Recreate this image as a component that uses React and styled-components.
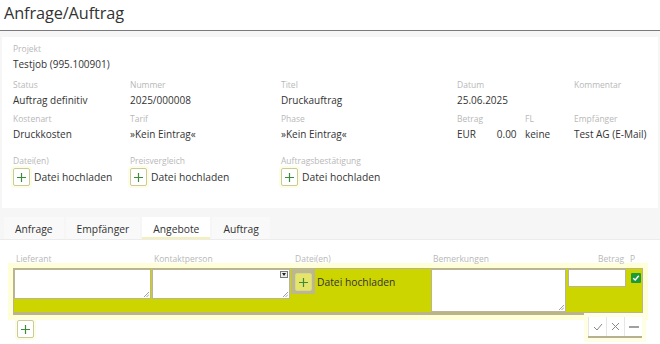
import React from 'react';
import styled, { createGlobalStyle } from 'styled-components';

const GlobalStyle = createGlobalStyle`
  body {
    margin: 0;
    background: #f6f6f6;
    font-family: "Open Sans", "Liberation Sans", sans-serif;
    color: #333;
  }
`;

const Page = styled.div`
  width: 660px;
  height: 344px;
  overflow: hidden;
`;

const Header = styled.div`
  height: 31px;
  background: #fff;
  border-bottom: 1px solid #7a7a7a;
  box-sizing: border-box;
`;

const Title = styled.h1`
  margin: 0;
  padding: 0 0 0 4px;
  font-size: 16.3px;
  letter-spacing: -0.1px;
  font-weight: 400;
  line-height: 26px;
  color: #333;
`;

const Card = styled.div`
  margin: 6px 2px 0 2px;
  background: #fff;
  height: 171px;
  padding: 6px 0 0 11px;
  box-sizing: border-box;
`;

const Grid = styled.div`
  display: grid;
  grid-template-columns: 117px 151px 176px 68px 49px 1fr;
  grid-auto-rows: auto;
`;

const Field = styled.div`
  grid-column: ${p => p.span ? `span ${p.span}` : 'auto'};
  height: ${p => p.h || 34}px;
`;

const Label = styled.div`
  font-size: 8.5px;
  line-height: 12px;
  color: #b8b8b8;
`;

const Value = styled.div`
  font-size: 10px;
  line-height: 14px;
  margin-top: 2px;
  color: #333;
  white-space: nowrap;
`;

const Upload = styled.div`
  display: flex;
  align-items: center;
  gap: 4px;
  margin-top: 1px;
  font-size: 10.3px;
  color: #333;
  white-space: nowrap;
`;

const PlusBtn = styled.span`
  display: inline-flex;
  align-items: center;
  justify-content: center;
  width: 17px;
  height: 18px;
  box-sizing: border-box;
  background: ${p => p.tint ? '#e4e56a' : '#fff'};
  border: 1px solid ${p => p.tint ? '#d7d88a' : '#c9cc9a'};
  border-radius: 2px;
  box-shadow: 0 0 0 2px ${p => p.tint ? 'transparent' : '#fdfde6'};
  flex: none;
`;

const TabSection = styled.div`
  margin-top: 9px;
`;

const TabBar = styled.div`
  display: flex;
  gap: 2px;
  padding-left: 4px;
  height: 22px;
  align-items: flex-end;
  border-bottom: 1px solid #ececec;
`;

const Tab = styled.div`
  height: 22px;
  padding: 4px 11px 0 11px;
  box-sizing: border-box;
  display: flex;
  align-items: center;
  font-size: 10.3px;
  color: #333;
  background: ${p => p.active ? '#fff' : '#f9f9f9'};
  border-bottom: 2px solid ${p => p.active ? '#f3f0b8' : 'transparent'};
`;

const TabBody = styled.div`
  background: #fff;
  height: 110px;
  padding: 13px 17px 0 13px;
  box-sizing: border-box;
`;

const cols = '138px 139px 140px 137px 60px 16px';

const HeadRow = styled.div`
  display: grid;
  grid-template-columns: ${cols};
  font-size: 8.5px;
  color: #b8b8b8;
  height: 15px;
  padding-left: 3px;
`;

const HeadCell = styled.div`
  text-align: ${p => p.right ? 'right' : 'left'};
  padding-right: ${p => p.right ? '6px' : 0};
  padding-left: ${p => p.shift || 0}px;
`;

const Row = styled.div`
  display: grid;
  grid-template-columns: ${cols};
  height: 47px;
  box-sizing: border-box;
  background: #cdd500;
  border: 1px solid #bcb489;
  border-bottom-width: 3px;
  box-shadow: 0 0 0 5px #fefed8;
`;

const Cell = styled.div`
  position: relative;
  display: flex;
  align-items: flex-start;
  padding: ${p => p.pad || 0};
`;

const TextArea = styled.div`
  position: relative;
  width: 100%;
  height: ${p => p.h}px;
  background: #fff;
  border: 1px solid #b9b49a;
  box-sizing: border-box;
`;

const Grip = styled.svg`
  position: absolute;
  right: 1px;
  bottom: 1px;
`;

const DropArrow = styled.span`
  position: absolute;
  top: 1px;
  right: 1px;
  width: 8px;
  height: 7px;
  background: #eee;
  border: 1px solid #777;
  box-sizing: border-box;
  &::after {
    content: '';
    position: absolute;
    left: 1px;
    top: 1px;
    border-left: 2px solid transparent;
    border-right: 2px solid transparent;
    border-top: 3px solid #222;
  }
`;

const CellUpload = styled(Upload)`
  margin: 0;
  gap: 2px;
`;

const PlusWell = styled.span`
  display: inline-flex;
  padding: 4px 3px 3px 4px;
  background: #bdb78d;
`;

const Check = styled.span`
  display: inline-flex;
  align-items: center;
  justify-content: center;
  width: 10px;
  height: 10px;
  margin: 4px 0 0 3px;
  background: #1f9a3a;
  border-radius: 1px;
`;

const Footer = styled.div`
  display: flex;
  justify-content: space-between;
  align-items: flex-start;
  margin-top: 2px;
`;

const AddBtn = styled(PlusBtn)`
  margin: 3px 0 0 4px;
`;

const Actions = styled.div`
  display: flex;
  margin-right: 1px;
  box-shadow: 0 0 0 4px #fefee4;
  border-bottom: 2px solid #b5b08e;
`;

const ActionBtn = styled.span`
  display: flex;
  align-items: center;
  justify-content: center;
  width: 17px;
  height: 19px;
  background: #fff;
  border-left: 1px solid #e6e6e6;
`;

const ResizeGrip = () => (
  <Grip width="6" height="6" viewBox="0 0 6 6">
    <path d="M1 6 L6 1 M3.5 6 L6 3.5" stroke="#888" strokeWidth="0.8" />
  </Grip>
);

const Plus = () => (
  <svg width="11" height="11" viewBox="0 0 11 11">
    <path d="M5.5 1 V10 M1 5.5 H10" stroke="#3d8a3d" strokeWidth="1.2" />
  </svg>
);

const UploadButton = () => (
  <Upload>
    <PlusBtn><Plus /></PlusBtn>
    Datei hochladen
  </Upload>
);

export default function App() {
  return (
    <Page>
      <GlobalStyle />
      <Header>
        <Title>Anfrage/Auftrag</Title>
      </Header>
      <Card>
        <Grid>
          <Field span={6} h={36}>
            <Label>Projekt</Label>
            <Value>Testjob (995.100901)</Value>
          </Field>
          <Field h={34}><Label>Status</Label><Value>Auftrag definitiv</Value></Field>
          <Field><Label>Nummer</Label><Value>2025/000008</Value></Field>
          <Field><Label>Titel</Label><Value>Druckauftrag</Value></Field>
          <Field span={2}><Label>Datum</Label><Value>25.06.2025</Value></Field>
          <Field><Label>Kommentar</Label><Value></Value></Field>
          <Field h={42}><Label>Kostenart</Label><Value>Druckkosten</Value></Field>
          <Field h={42}><Label>Tarif</Label><Value>»Kein Eintrag«</Value></Field>
          <Field h={42}><Label>Phase</Label><Value>»Kein Eintrag«</Value></Field>
          <Field h={42}>
            <Label>Betrag</Label>
            <Value>EUR&nbsp;&nbsp;&nbsp;&nbsp;&nbsp;&nbsp;&nbsp;&nbsp;0.00</Value>
          </Field>
          <Field h={42}><Label>FL</Label><Value>keine</Value></Field>
          <Field h={42}><Label>Empfänger</Label><Value>Test AG (E-Mail)</Value></Field>
          <Field><Label>Datei(en)</Label><UploadButton /></Field>
          <Field><Label>Preisvergleich</Label><UploadButton /></Field>
          <Field span={4}><Label>Auftragsbestätigung</Label><UploadButton /></Field>
        </Grid>
      </Card>
      <TabSection>
        <TabBar>
          <Tab>Anfrage</Tab>
          <Tab>Empfänger</Tab>
          <Tab active>Angebote</Tab>
          <Tab>Auftrag</Tab>
        </TabBar>
        <TabBody>
          <HeadRow>
            <HeadCell>Lieferant</HeadCell>
            <HeadCell>Kontaktperson</HeadCell>
            <HeadCell shift={2}>Datei(en)</HeadCell>
            <HeadCell>Bemerkungen</HeadCell>
            <HeadCell right>Betrag</HeadCell>
            <HeadCell>P</HeadCell>
          </HeadRow>
          <Row>
            <Cell pad="0 1px 0 0">
              <TextArea h={30}><ResizeGrip /></TextArea>
            </Cell>
            <Cell pad="0 1px 0 0">
              <TextArea h={30}><DropArrow /><ResizeGrip /></TextArea>
            </Cell>
            <Cell>
              <CellUpload>
                <PlusWell><PlusBtn tint><Plus /></PlusBtn></PlusWell>
                Datei hochladen
              </CellUpload>
            </Cell>
            <Cell pad="0 2px 0 0">
              <TextArea h={43}><ResizeGrip /></TextArea>
            </Cell>
            <Cell pad="0 2px 0 0">
              <TextArea h={18} />
            </Cell>
            <Cell>
              <Check>
                <svg width="8" height="8" viewBox="0 0 8 8">
                  <path d="M1.2 4.2 L3.2 6 L6.8 1.8" stroke="#fff" strokeWidth="1.4" fill="none" />
                </svg>
              </Check>
            </Cell>
          </Row>
          <Footer>
            <AddBtn><Plus /></AddBtn>
            <Actions>
              <ActionBtn>
                <svg width="10" height="8" viewBox="0 0 10 8">
                  <path d="M1 4 L4 7 L9 1" stroke="#888" strokeWidth="1" fill="none" />
                </svg>
              </ActionBtn>
              <ActionBtn>
                <svg width="9" height="9" viewBox="0 0 9 9">
                  <path d="M1 1 L8 8 M8 1 L1 8" stroke="#888" strokeWidth="1" />
                </svg>
              </ActionBtn>
              <ActionBtn>
                <svg width="10" height="2" viewBox="0 0 10 2">
                  <path d="M0 1 H10" stroke="#777" strokeWidth="1.4" />
                </svg>
              </ActionBtn>
            </Actions>
          </Footer>
        </TabBody>
      </TabSection>
    </Page>
  );
}
